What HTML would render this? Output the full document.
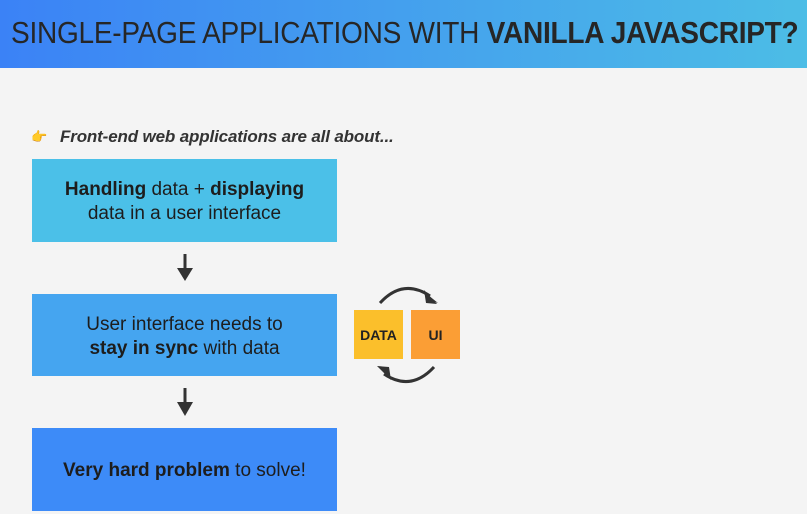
<!DOCTYPE html>
<html><head><meta charset="utf-8"><style>
*{margin:0;padding:0;box-sizing:border-box}
body{width:807px;height:514px;background:#f4f4f4;position:relative;overflow:hidden;font-family:"Liberation Sans",sans-serif;color:#222}
.hdr{position:absolute;left:0;top:0;width:807px;height:68px;background:linear-gradient(90deg,#3b82f6,#46a6ec 60%,#4cbde6)}
.hdr div{position:absolute;left:11px;top:15px;font-size:31px;white-space:nowrap;transform-origin:0 0;transform:scaleX(0.905);color:#262626;letter-spacing:-0.3px}
.sub{position:absolute;left:60px;top:127px;font-size:17px;font-style:italic;font-weight:bold;color:#333;letter-spacing:-0.15px}
.hand{position:absolute;left:31px;top:129px;font-size:13px;color:#f0a020}
.box{position:absolute;left:32px;width:305px;display:flex;align-items:center;justify-content:center;text-align:center;font-size:19px;line-height:24px;color:#1d1d1d;padding-top:3px}
.sq{position:absolute;top:310px;width:49px;height:49px;display:flex;align-items:center;justify-content:center;font-weight:bold;font-size:14px;color:#222}
</style></head><body>
<div class="hdr"><div>SINGLE-PAGE APPLICATIONS WITH <b>VANILLA JAVASCRIPT?</b></div></div>
<div class="hand">👉</div>
<div class="sub">Front-end web applications are all about...</div>
<div class="box" style="top:159px;height:83px;background:#4bc0e8"><div><b>Handling</b> data + <b>displaying</b><br>data in a user interface</div></div>
<div class="box" style="top:294px;height:82px;background:#45a5f0"><div>User interface needs to<br><b>stay in sync</b> with data</div></div>
<div class="box" style="top:428px;height:83px;background:#3d8bf8"><div><b>Very hard problem</b> to solve!</div></div>
<svg style="position:absolute;left:0;top:0" width="807" height="514">
<g fill="#333" stroke="#333">
<line x1="185" y1="254" x2="185" y2="272" stroke-width="3"/><polygon points="177,268 193,268 185,281" stroke="none"/>
<line x1="185" y1="388" x2="185" y2="406" stroke-width="3"/><polygon points="177,402 193,402 185,416" stroke="none"/>
</g>
<path d="M380 303 Q403 278 430 296" fill="none" stroke="#333" stroke-width="3"/>
<polygon points="424,290 437,304 426,303" fill="#333"/>
<polygon points="423,291 438,303 428,300" fill="#333"/>
<path d="M434 367 Q411 392 384 374" fill="none" stroke="#333" stroke-width="3"/>
<polygon points="391,380 377,366 389,367" fill="#333"/>
</svg>
<div class="sq" style="left:354px;background:#fbbf2b">DATA</div>
<div class="sq" style="left:411px;background:#fb9e35">UI</div>
</body></html>
